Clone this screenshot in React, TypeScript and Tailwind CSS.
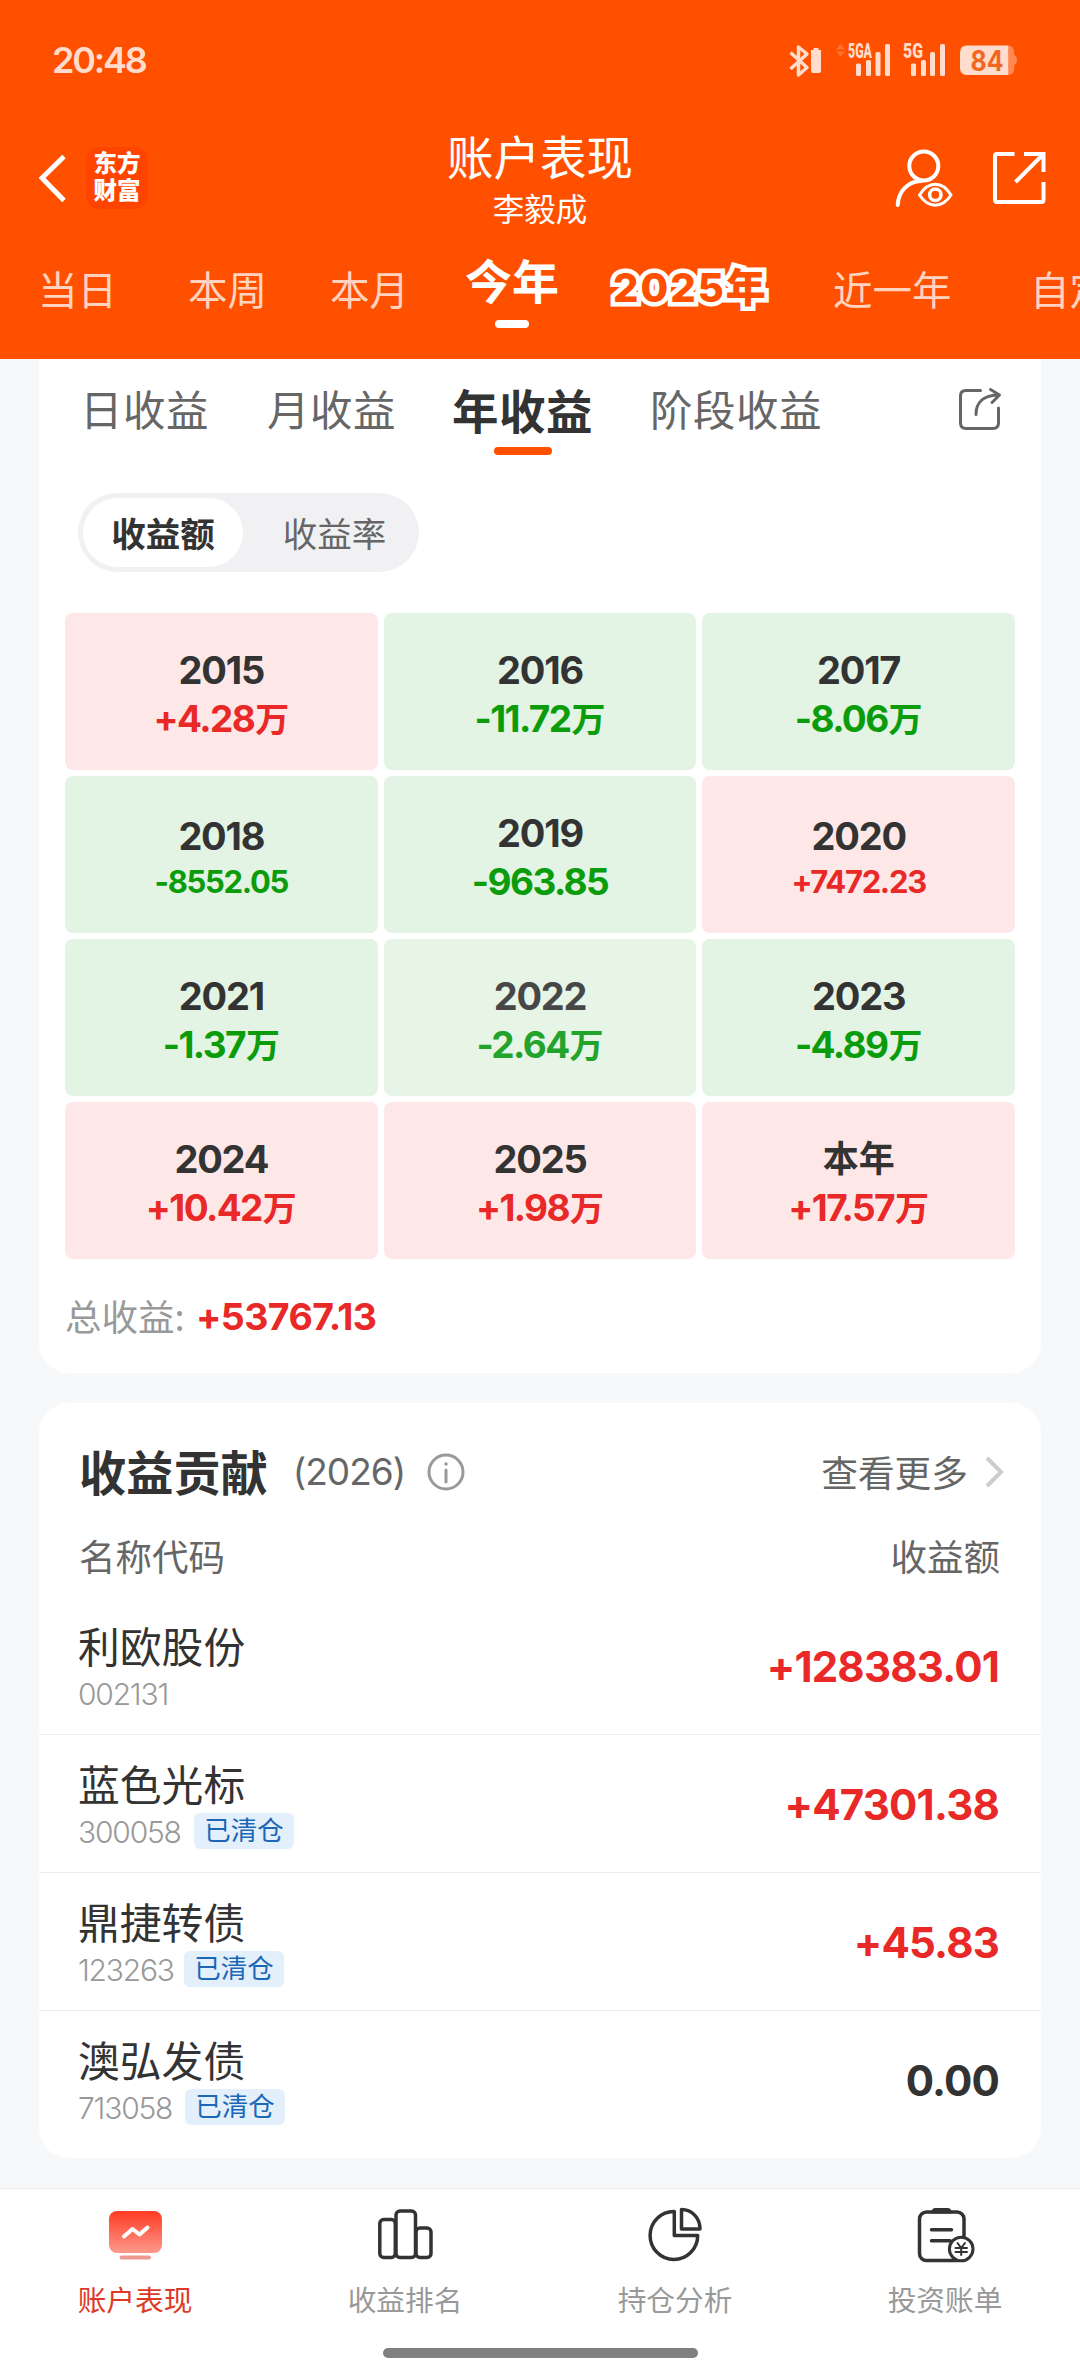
import React from 'react';
import clsx from 'clsx';

type Tone = 'up' | 'down' | 'flat';

interface YearCell {
  label: string;
  value: string;
  unit?: string;
  tone: Tone;
  small?: boolean;
  dim?: boolean;
}

interface Holding {
  name: string;
  code: string;
  amount: string;
  tone: Tone;
  cleared: boolean;
  codeClass: string;
}

const years: YearCell[] = [
  { label: '2015', value: '+4.28', unit: '万', tone: 'up' },
  { label: '2016', value: '-11.72', unit: '万', tone: 'down' },
  { label: '2017', value: '-8.06', unit: '万', tone: 'down' },
  { label: '2018', value: '-8552.05', tone: 'down', small: true },
  { label: '2019', value: '-963.85', tone: 'down' },
  { label: '2020', value: '+7472.23', tone: 'up', small: true },
  { label: '2021', value: '-1.37', unit: '万', tone: 'down' },
  { label: '2022', value: '-2.64', unit: '万', tone: 'down', dim: true },
  { label: '2023', value: '-4.89', unit: '万', tone: 'down' },
  { label: '2024', value: '+10.42', unit: '万', tone: 'up' },
  { label: '2025', value: '+1.98', unit: '万', tone: 'up' },
  { label: '本年', value: '+17.57', unit: '万', tone: 'up' },
];

const holdings: Holding[] = [
  { name: '利欧股份', code: '002131', amount: '+128383.01', tone: 'up', cleared: false, codeClass: 'w-[92px]' },
  { name: '蓝色光标', code: '300058', amount: '+47301.38', tone: 'up', cleared: true, codeClass: 'w-[103px]' },
  { name: '鼎捷转债', code: '123263', amount: '+45.83', tone: 'up', cleared: true, codeClass: 'w-[93px]' },
  { name: '澳弘发债', code: '713058', amount: '0.00', tone: 'flat', cleared: true, codeClass: 'w-[94px]' },
];

const StatusBar: React.FC = () => (
  <div className="flex h-[120px] items-center justify-between pl-[52px] pr-[62px] text-[#ffdccc]">
    <span className="font-[Inter,sans-serif] text-[36px] leading-[40px] font-semibold tracking-[-2.2px]">20:48</span>
    <svg className="h-[40px] w-[230px]" viewBox="788 39 230 40" fill="currentColor">
      <path d="M790.500 51.500 L807 66.500 L798.500 74 V46 L807 53 L790.500 68" fill="none" stroke="currentColor" strokeWidth="3.500" strokeLinejoin="round" />
      <path d="M811 49 h2.500 v-2 h5 v2 h2.500 v21 q0 2 -2 2 h-6 q-2 0 -2 -2z" />
      <path d="M836 48.500 l4.500 -5.500 l4.500 5.500z M836 50.500 h9 l-4.500 5z" opacity="0.25" />
      <text x="848" y="57" fontSize="19.500" fontWeight="900" fontFamily="Roboto, sans-serif" textLength="24" lengthAdjust="spacingAndGlyphs">5GA</text>
      <rect x="856" y="62.500" width="5" height="12.500" rx="1.500" />
      <rect x="866" y="59" width="5" height="16" rx="1.500" />
      <rect x="875.500" y="51" width="5" height="24" rx="1.500" />
      <rect x="885" y="43" width="5" height="32" rx="1.500" />
      <text x="903" y="57" fontSize="19.500" fontWeight="900" fontFamily="Roboto, sans-serif" textLength="20" lengthAdjust="spacingAndGlyphs">5G</text>
      <rect x="911" y="62.500" width="5" height="12.500" rx="1.500" />
      <rect x="921" y="59" width="5" height="16" rx="1.500" />
      <rect x="930" y="51" width="5" height="24" rx="1.500" />
      <rect x="940" y="43" width="5" height="32" rx="1.500" />
      <path d="M1008.300 44.500 q6 0 6 8 v1.500 q2.700 1 2.700 5 q0 4 -2.700 5 v2 q0 8 -6 8z" opacity="0.4" />
      <path d="M967 44.500 h41.300 v29.500 h-41.300 q-7 0 -7 -7 v-15.500 q0 -7 7 -7z" />
      <text x="987" y="70" fontSize="28" fontWeight="700" fontFamily="Inter, sans-serif" textAnchor="middle" textLength="33" lengthAdjust="spacingAndGlyphs" fill="#f2661f">84</text>
    </svg>
  </div>
);

const TitleBar: React.FC = () => (
  <div className="grid h-[116px] grid-cols-3 items-center px-[39px]">
    <div className="flex items-center gap-[20px]">
      <svg className="h-[48px] w-[27px]" viewBox="39 154 27 48" fill="none" stroke="white" strokeWidth="5">
        <path d="M64 156.500 L42 178 L64 200.500" />
      </svg>
      <div className="flex h-[62px] w-[62px] flex-col items-center justify-center rounded-[13px] bg-[#ff4400] pb-[5px] text-[23.500px] leading-[27px] font-black">
        <span>东方</span>
        <span>财富</span>
      </div>
    </div>
    <div className="flex flex-col items-center">
      <h1 className="text-[46.500px] leading-[58px] font-normal">账户表现</h1>
      <p className="text-[31.500px] leading-[46px]">李毅成</p>
    </div>
    <div className="flex items-center justify-end">
      <svg className="-mr-[6px] h-[60px] w-[152px] shrink-0" viewBox="895 148 152 60" fill="none" stroke="white" strokeWidth="4" strokeLinecap="round">
        <circle cx="923.800" cy="166" r="14.500" />
        <path d="M897.700 205 C898.500 191 908 181.500 921 181" />
        <path d="M919.500 195 C928 180.500 942.500 180.500 951 195 C942.500 208.500 928 208.500 919.500 195z" strokeWidth="3" strokeLinejoin="round" />
        <circle cx="935.300" cy="194.700" r="5.700" strokeWidth="3.500" />
        <path d="M1014.500 154 H997 Q995 154 995 156 V200 Q995 202 997 202 H1041.500 Q1043.500 202 1043.500 200 V182" strokeLinecap="butt" />
        <path d="M1024 154 H1043.500 V172 M1043 154.500 L1015.500 182" strokeLinecap="butt" />
      </svg>
    </div>
  </div>
);

const PeriodTabs: React.FC = () => (
  <div className="flex h-[123px] items-start overflow-hidden whitespace-nowrap pt-[20px] text-[39.500px] leading-[64px] text-[#ffd3bf]">
    <span className="ml-[38px] w-[150px] shrink-0">当日</span>
    <span className="w-[142px] shrink-0">本周</span>
    <span className="w-[135px] shrink-0">本月</span>
    <div className="-mt-[9px] flex w-[143px] shrink-0 flex-col">
      <span className="text-[47px] leading-[64px] font-bold text-white">今年</span>
      <span className="ml-[30px] mt-[9px] h-[8px] w-[34px] rounded-full bg-white" />
    </div>
    <span className="w-[225px] shrink-0 pl-[5px] font-[Inter,'Noto_Sans_CJK_SC',sans-serif] text-[40px] font-extrabold tracking-[2px] text-[#ff5000] [-webkit-text-stroke:9px_white] [paint-order:stroke_fill] [stroke-linejoin:round]">
      2025年
    </span>
    <span className="w-[197px] shrink-0">近一年</span>
    <span className="shrink-0">自定义</span>
  </div>
);

const ProfitTabs: React.FC = () => (
  <div className="flex h-[110px] items-start whitespace-nowrap pl-[41px] pr-[38px] pt-[19px] text-[42.500px] leading-[60px] tracking-[0.5px] text-[#666]">
    <span className="w-[187px] shrink-0">日收益</span>
    <span className="w-[185px] shrink-0">月收益</span>
    <div className="flex w-[198px] shrink-0 flex-col">
      <span className="text-[46.500px] leading-[62px] font-bold text-[#333]">年收益</span>
      <span className="ml-[42px] mt-[7px] h-[8px] w-[58px] rounded-full bg-[#ff5000]" />
    </div>
    <span className="grow">阶段收益</span>
    <svg className="mt-[8px] h-[46px] w-[46px]" viewBox="957 386 46 46" fill="none" stroke="#666" strokeWidth="3" strokeLinecap="round" strokeLinejoin="round">
      <path d="M980.500 390.500 H966 Q960.500 390.500 960.500 396 V423 Q960.500 428.500 966 428.500 H993 Q998.500 428.500 998.500 423 V408" />
      <path d="M976 414.500 C976 403 983 395 999 395 M990.500 389.500 L999.500 395 L992 402.500" />
    </svg>
  </div>
);

const ModeSwitch: React.FC = () => (
  <div className="ml-[39px] mt-[24px] flex h-[79px] w-[341px] items-center rounded-full bg-[#f1f1f4] pl-[5px] text-[34.500px]">
    <div className="flex h-[69px] w-[160px] items-center justify-center rounded-full bg-white font-bold text-[#333]">收益额</div>
    <div className="flex h-[69px] grow items-center justify-center pl-[7px] text-[#666]">收益率</div>
  </div>
);

const YearGrid: React.FC = () => (
  <div className="mx-[26px] mt-[41px] grid grid-cols-3 gap-[6px] font-[Inter,'Noto_Sans_CJK_SC',sans-serif] font-bold">
    {years.map((cell) => (
      <div
        key={cell.label}
        className={clsx(
          'flex h-[157px] flex-col items-center rounded-[8px]',
          cell.tone === 'up' && 'bg-[#fde8e7]',
          cell.tone === 'down' && (cell.dim ? 'bg-[#e6f5e6]' : 'bg-[#e3f4e4]'),
        )}
      >
        <span
          className={clsx(
            'leading-[48px]',
            cell.label === '本年' ? 'text-[36px]' : 'text-[38px] tracking-[-1.2px]',
            cell.small ? 'mt-[36px]' : 'mt-[33px]',
            cell.dim ? 'text-[#474747]' : 'text-[#333]',
          )}
        >
          {cell.label}
        </span>
        <span
          className={clsx(
            'leading-[48px]',
            cell.small ? '-mt-[2px] text-[31px] tracking-[-1.3px]' : 'mt-px text-[37px] tracking-[-1.6px]',
            cell.tone === 'up' && 'text-[#e92828]',
            cell.tone === 'down' && (cell.dim ? 'text-[#21a32c]' : 'text-[#0b9c0b]'),
          )}
        >
          {cell.value}
          {cell.unit && <span className="ml-px text-[34px] tracking-normal">{cell.unit}</span>}
        </span>
      </div>
    ))}
  </div>
);

const ContributionHeader: React.FC = () => (
  <>
    <div className="flex h-[98px] items-center pl-[40px] pr-[37px] pt-[40px]">
      <h2 className="-mt-[3px] text-[47.200px] leading-[58px] font-bold text-[#333]">收益贡献</h2>
      <span className="ml-[25px] w-[134px] font-[Inter,sans-serif] text-[37px] leading-[58px] tracking-[-1px] text-[#666]">(2026)</span>
      <svg className="h-[38px] w-[38px]" viewBox="0 0 38 38" fill="none" stroke="#999" strokeWidth="3">
        <circle cx="19" cy="19" r="17" />
        <path d="M19 17 V29" strokeLinecap="round" />
        <circle cx="19" cy="11" r="1.800" fill="#999" stroke="none" />
      </svg>
      <span className="-mt-[3px] ml-auto text-[36.700px] leading-[58px] text-[#666]">查看更多</span>
      <svg className="ml-[16px] h-[34px] w-[20px]" viewBox="0 0 20 34" fill="none" stroke="#ccc" strokeWidth="4">
        <path d="M3 3 L17 17 L3 31" />
      </svg>
    </div>
    <div className="flex h-[96px] items-center justify-between px-[40px] pt-[15px] text-[36.500px] text-[#666]">
      <span>名称代码</span>
      <span className="pr-[1px]">收益额</span>
    </div>
  </>
);

const HoldingRow: React.FC<{ item: Holding }> = ({ item }) => (
  <li className="flex h-[138px] items-start justify-between border-b border-[#ebebeb] pl-[39px] pr-[42px] last:border-b-0">
    <div className="flex flex-col pt-[18px]">
      <span className="text-[41.800px] leading-[60px] text-[#333]">{item.name}</span>
      <div className="flex h-[36px] items-start">
        <span className={clsx('mt-[2px] font-[Inter,sans-serif] text-[30px] leading-[34px] font-[350] tracking-[-1.2px] text-[#999]', item.codeClass)}>
          {item.code}
        </span>
        {item.cleared && (
          <span className="ml-[13px] h-[36px] w-[100px] rounded-[6px] bg-[#e3effb] text-center text-[26.500px] leading-[31px] text-[#1c67b6]">
            已清仓
          </span>
        )}
      </div>
    </div>
    <span
      className={clsx(
        'mt-[42px] font-[Inter,sans-serif] text-[42px] leading-[56px] font-bold tracking-[-0.8px]',
        item.tone === 'up' ? 'text-[#e92828]' : 'text-[#333]',
      )}
    >
      {item.amount}
    </span>
  </li>
);

const PerformanceIcon = () => (
  <svg className="h-[60px] w-[60px]" viewBox="105 2205 60 60" fill="none">
    <defs>
      <linearGradient id="screen" x1="0" y1="0" x2="0" y2="1">
        <stop offset="0" stopColor="#ff3a22" />
        <stop offset="1" stopColor="#fd9a8d" />
      </linearGradient>
    </defs>
    <rect x="109" y="2211" width="53" height="42" rx="8" fill="url(#screen)" />
    <rect x="119.500" y="2255.500" width="31.500" height="4" rx="2" fill="#ef9a8e" />
    <path d="M124 2236.500 L132.500 2229 L139.500 2234.500 L147.500 2227.500" stroke="white" strokeWidth="4" strokeLinecap="round" strokeLinejoin="round" />
  </svg>
);

const RankingIcon = () => (
  <svg className="h-[60px] w-[60px]" viewBox="375 2205 60 60" fill="none" stroke="#333" strokeWidth="3.500">
    <rect x="379.800" y="2219.500" width="15.500" height="38" rx="4" />
    <rect x="396" y="2211" width="19.500" height="46.500" rx="4" />
    <rect x="416" y="2228" width="15" height="29.500" rx="4" />
  </svg>
);

const AnalysisIcon = () => (
  <svg className="h-[60px] w-[60px]" viewBox="645 2205 60 60" fill="none" stroke="#333" strokeWidth="3.500" strokeLinejoin="round">
    <path d="M674.300 2211.500 A23.800 24 0 1 0 697.700 2235.500 H674.300z" />
    <path d="M681.500 2209.500 V2229 H700 C700 2218 692 2209.500 681.500 2209.500z" />
  </svg>
);

const BillIcon = () => (
  <svg className="h-[60px] w-[60px]" viewBox="915 2205 60 60" fill="none" stroke="#333" strokeWidth="3.500" strokeLinecap="round">
    <rect x="919.500" y="2212" width="44.500" height="48.500" rx="7" />
    <path d="M930.500 2213.500 q1 -5.500 5 -5.500 h12 q4 0 5 5.500z" fill="#333" stroke="none" />
    <path d="M931.500 2229.700 H951.500 M931.500 2240.700 H950" />
    <circle cx="961.200" cy="2249" r="11.800" fill="white" strokeWidth="3" />
    <path d="M957.500 2243 L961.200 2248 L965 2243 M961.200 2248 V2255 M955.500 2248 H967 M955.500 2252 H967" strokeWidth="2" />
  </svg>
);

const navItems = [
  { label: '账户表现', icon: <PerformanceIcon />, active: true },
  { label: '收益排名', icon: <RankingIcon />, active: false },
  { label: '持仓分析', icon: <AnalysisIcon />, active: false },
  { label: '投资账单', icon: <BillIcon />, active: false },
];

const BottomNav: React.FC = () => (
  <nav className="flex h-[188px] flex-col items-center border-t border-[#ebebeb] bg-white">
    <div className="grid h-[159px] w-full grid-cols-4 pt-[16px]">
      {navItems.map((item) => (
        <div key={item.label} className="flex flex-col items-center">
          {item.icon}
          <span className={clsx('mt-[12px] text-[28.700px] leading-[44px]', item.active ? 'text-[#dd3a26]' : 'text-[#999]')}>
            {item.label}
          </span>
        </div>
      ))}
    </div>
    <div className="h-[10px] w-[315px] rounded-full bg-[#808080]" />
  </nav>
);

export default function App() {
  return (
    <div className="flex h-[2376px] w-[1080px] flex-col overflow-hidden bg-[#f7f8fa] font-['Noto_Sans_CJK_SC',sans-serif]">
      <header className="h-[359px] shrink-0 bg-[#ff5000] text-white">
        <StatusBar />
        <TitleBar />
        <PeriodTabs />
      </header>

      <main className="flex grow flex-col px-[39px]">
        <section className="h-[1014px] rounded-b-[30px] bg-white">
          <ProfitTabs />
          <ModeSwitch />
          <YearGrid />
          {/* Total */}
          <div className="ml-[26px] mt-[30px] flex h-[56px] items-center">
            <span className="-mt-[2px] w-[131px] text-[36.500px] text-[#999]">总收益:</span>
            <span className="font-[Inter,sans-serif] text-[37.500px] font-bold tracking-[-0.6px] text-[#e92828]">+53767.13</span>
          </div>
        </section>

        <section className="mt-[30px] h-[755px] rounded-[30px] bg-white">
          <ContributionHeader />
          <ul>
            {holdings.map((item) => (
              <HoldingRow key={item.code} item={item} />
            ))}
          </ul>
        </section>
      </main>

      <BottomNav />
    </div>
  );
}
